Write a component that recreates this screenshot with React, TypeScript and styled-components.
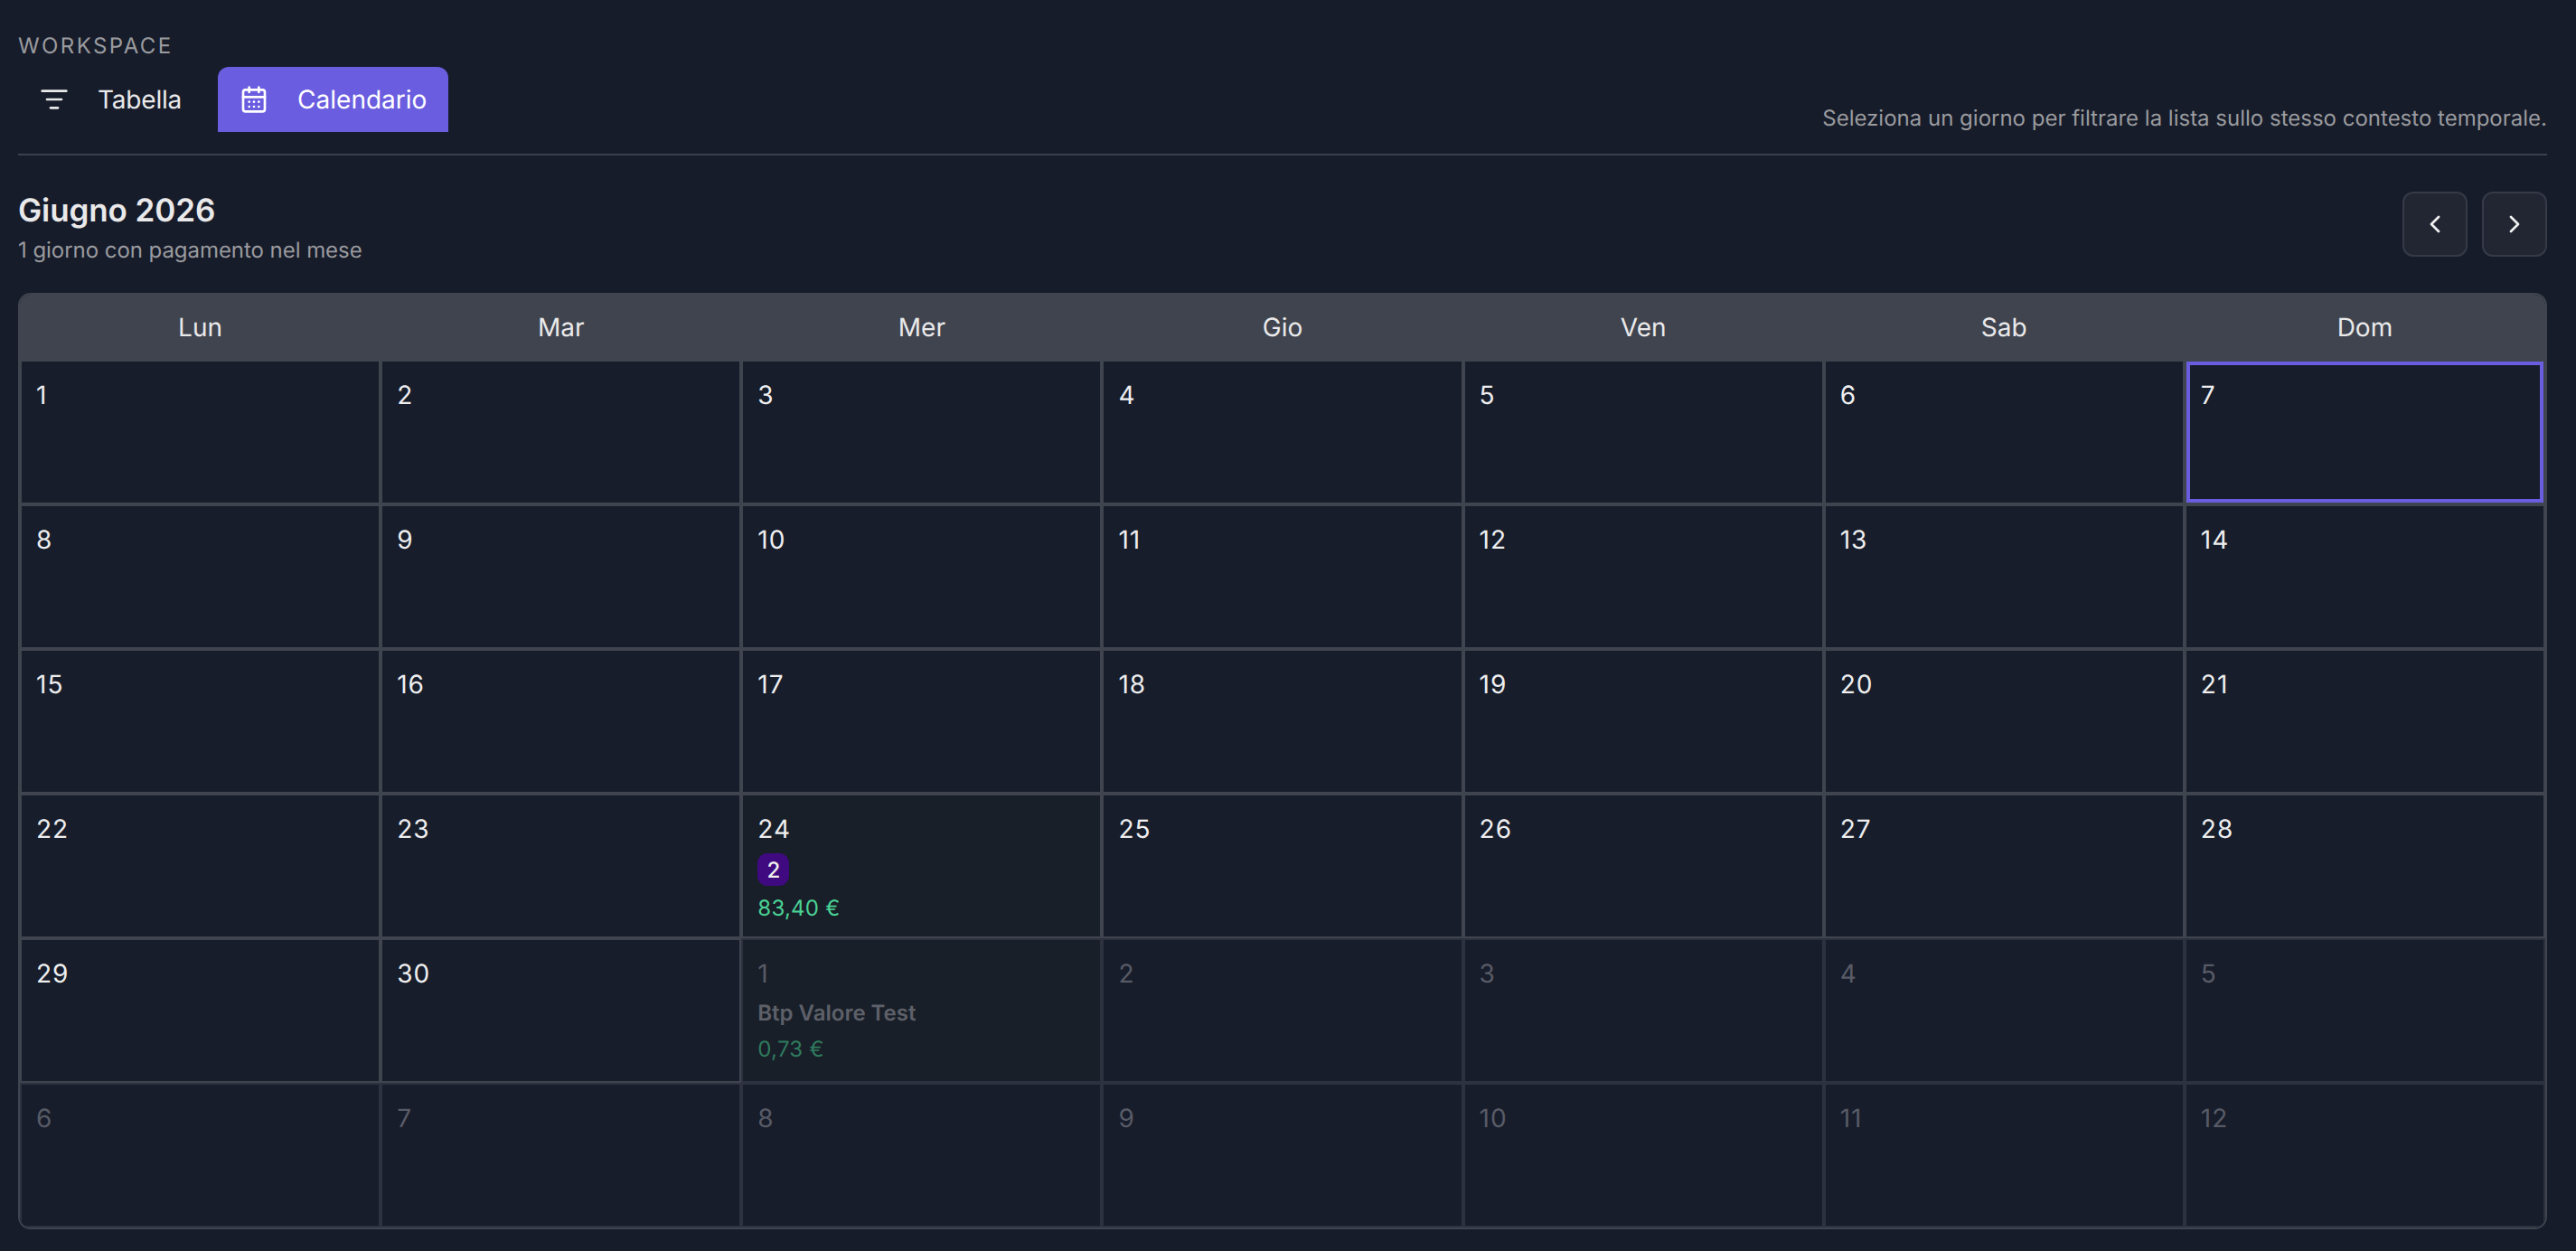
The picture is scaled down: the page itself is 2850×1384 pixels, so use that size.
import React from "react";
import styled, { createGlobalStyle } from "styled-components";
import { ListFilter, CalendarDays, ChevronLeft, ChevronRight } from "lucide-react";

const Global = createGlobalStyle`
  html, body { margin: 0; padding: 0; background: #171c2a; }
  body { font-family: Inter, "Noto Sans", sans-serif; color: #e9e9ea; -webkit-font-smoothing: antialiased; text-rendering: geometricPrecision; }
  * { box-sizing: border-box; }
`;

const Page = styled.div`
  height: 1384px;
  padding: 33px 32px 0 20px;
  overflow: hidden;
`;
const TopBar = styled.div`
  display: flex;
  justify-content: space-between;
  align-items: flex-end;
  padding-bottom: 24px;
  border-bottom: 2px solid #3c404d;
`;
const Label = styled.div`
  font-size: 24px;
  line-height: 36px;
  letter-spacing: 2.4px;
  color: #9a9b9f;
  margin-bottom: 5px;
`;
const Tabs = styled.div`
  display: flex;
  gap: 16px;
`;
const Tab = styled.div<{ $active?: boolean }>`
  display: flex;
  align-items: center;
  gap: 32px;
  height: 72px;
  padding: 0 24px;
  font-size: 28px;
  letter-spacing: ${(p) => (p.$active ? "0" : "-0.2px")};
  border-radius: 12px 12px 0 0;
  background: ${(p) => (p.$active ? "#6a5ddf" : "transparent")};
  color: ${(p) => (p.$active ? "#ffffff" : "#e9e9ea")};
`;
const Hint = styled.div`
  font-size: 24px;
  line-height: 36px;
  margin-bottom: -3px;
  color: #9a9b9f;
`;
const MonthBar = styled.div`
  display: flex;
  justify-content: space-between;
  align-items: flex-start;
  margin-top: 40px;
  margin-bottom: 29px;
`;
const Title = styled.div`
  font-size: 35px;
  line-height: 42px;
  font-weight: 600;
  letter-spacing: -0.1px;
  color: #e9e9ea;
  margin-bottom: 5px;
`;
const Sub = styled.div`
  font-size: 24px;
  line-height: 36px;
  letter-spacing: -0.05px;
  color: #9a9b9f;
`;
const Nav = styled.div`
  display: flex;
  gap: 16px;
`;
const NavButton = styled.div`
  width: 72px;
  height: 72px;
  display: flex;
  align-items: center;
  justify-content: center;
  border: 2px solid #363a47;
  border-radius: 12px;
  background: #222633;
  color: #f0f0f0;
`;
const Calendar = styled.div`
  border: 2px solid #40444f;
  border-radius: 14px;
  overflow: hidden;
`;
const Head = styled.div`
  display: grid;
  grid-template-columns: repeat(7, 1fr);
  height: 72px;
  background: #40444f;
`;
const HeadCell = styled.div`
  display: flex;
  align-items: center;
  justify-content: center;
  font-size: 28px;
  color: #e9e9ea;
`;
const Grid = styled.div`
  display: grid;
  grid-template-columns: repeat(7, 1fr);
  grid-auto-rows: 160px;
`;
const Cell = styled.div<{ $out?: boolean; $paid?: boolean; $today?: boolean }>`
  border: 2px solid ${(p) => (p.$out ? "#2e3240" : "#40444f")};
  padding: 16px;
  background: ${(p) => (p.$paid ? "#181f28" : "#171d2b")};
  box-shadow: ${(p) => (p.$today ? "inset 0 0 0 4px #6a5ddf" : "none")};
`;
const DayNum = styled.div<{ $out?: boolean }>`
  font-size: 28px;
  line-height: 42px;
  letter-spacing: 1px;
  color: ${(p) => (p.$out ? "#585b66" : "#eeeeef")};
`;
const Badge = styled.div`
  width: 35px;
  height: 36px;
  margin-top: 6px;
  display: flex;
  align-items: center;
  justify-content: center;
  border-radius: 11px;
  background: #3f0a80;
  color: #eeeeef;
  font-size: 24px;
  font-weight: 500;
`;
const Amount = styled.div<{ $out?: boolean; $tight?: boolean }>`
  font-size: 24px;
  line-height: 36px;
  letter-spacing: 0.25px;
  margin-top: ${(p) => (p.$tight ? 4 : 7)}px;
  color: ${(p) => (p.$out ? "#2f7a5e" : "#4ad295")};
`;
const PayName = styled.div`
  font-size: 24px;
  line-height: 36px;
  margin-top: 5px;
  font-weight: 600;
  color: #5e6069;
`;

const days = ["Lun", "Mar", "Mer", "Gio", "Ven", "Sab", "Dom"];
const cells: { d: number; out?: boolean }[] = [
  ...Array.from({ length: 30 }, (_, i) => ({ d: i + 1 })),
  ...Array.from({ length: 12 }, (_, i) => ({ d: i + 1, out: true })),
];

export default function App() {
  return (
    <Page>
      <Global />
      <TopBar>
        <div>
          <Label>WORKSPACE</Label>
          <Tabs>
            <Tab>
              <ListFilter size={32} />
              Tabella
            </Tab>
            <Tab $active>
              <CalendarDays size={32} />
              Calendario
            </Tab>
          </Tabs>
        </div>
        <Hint>Seleziona un giorno per filtrare la lista sullo stesso contesto temporale.</Hint>
      </TopBar>
      <MonthBar>
        <div>
          <Title>Giugno 2026</Title>
          <Sub>1 giorno con pagamento nel mese</Sub>
        </div>
        <Nav>
          <NavButton>
            <ChevronLeft size={32} />
          </NavButton>
          <NavButton>
            <ChevronRight size={32} />
          </NavButton>
        </Nav>
      </MonthBar>
      <Calendar>
        <Head>
          {days.map((d) => (
            <HeadCell key={d}>{d}</HeadCell>
          ))}
        </Head>
        <Grid>
          {cells.map((c, i) => {
            const paid = !c.out && c.d === 24;
            const next = !!c.out && c.d === 1;
            return (
              <Cell key={i} $out={c.out} $paid={paid || next} $today={!c.out && c.d === 7}>
                <DayNum $out={c.out}>{c.d}</DayNum>
                {paid && (
                  <>
                    <Badge>2</Badge>
                    <Amount>83,40 €</Amount>
                  </>
                )}
                {next && (
                  <>
                    <PayName>Btp Valore Test</PayName>
                    <Amount $out $tight>
                      0,73 €
                    </Amount>
                  </>
                )}
              </Cell>
            );
          })}
        </Grid>
      </Calendar>
    </Page>
  );
}
